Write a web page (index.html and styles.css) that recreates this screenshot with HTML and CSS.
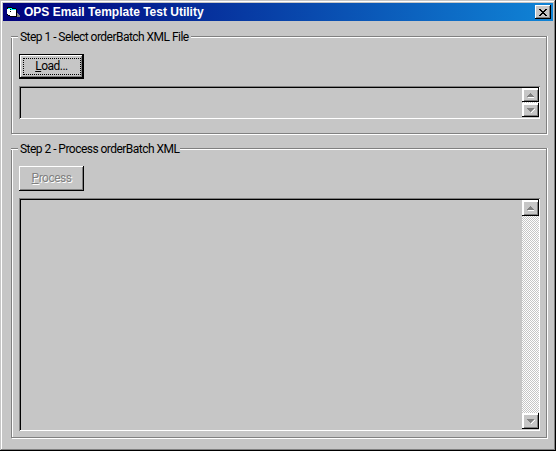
FILE: index.html
```html
<!DOCTYPE html>
<html lang="en">
<head>
<meta charset="utf-8">
<title>OPS Email Template Test Utility</title>
<link rel="stylesheet" href="styles.css">
</head>
<body>
<main class="window">
  <header class="titlebar">
    <svg class="app-icon" width="16" height="16" viewBox="0 0 16 16" shape-rendering="crispEdges">
      <path fill="#808080" d="M12 9h1v1h1v1h1v2h-3z"/>
      <path fill="#000" d="M2 3h5v1h4v1h1v8H5v-1H3v-1H2z"/>
      <path fill="#fff" d="M2 5h3v1h6v6H5v-1H3v-1H2z"/>
      <path fill="#00ffff" d="M3 4h4v1h4v1H6V5H3z"/>
      <path fill="#000" d="M5 7h1v1H5z"/>
    </svg>
    <h1 class="title">OPS Email Template Test Utility</h1>
    <button class="close" aria-label="Close"><svg width="8" height="7" viewBox="0 0 8 7" shape-rendering="crispEdges"><path d="M0 0h2v1h1v1h2V1h1V0h2v1H7v1H6v1H5v1h1v1h1v1h1v1H6V6H5V5H3v1H2v1H0V6h1V5h1V4h1V3H2V2H1V1H0z"/></svg></button>
  </header>
  <section class="group group-load">
    <h2 class="legend"><span class="legend-text step-one">Step 1 - Select orderBatch XML File</span></h2>
    <button class="button default"><span class="focus"><span class="caption"><u>L</u>oad...</span></span></button>
    <div class="textbox path-box">
      <div class="scrollbar">
        <span class="arrow"><svg width="7" height="5" viewBox="0 0 7 5" shape-rendering="crispEdges"><path fill="#fff" d="M1 4h6v1H1z"/><path fill="#808080" d="M3 0h1v1h1v1h1v1h1v1H0V3h1V2h1V1h1z"/></svg></span>
        <span class="arrow"><svg width="8" height="5" viewBox="0 0 8 5" shape-rendering="crispEdges"><path fill="#fff" d="M7 1h1v1H7v1H6v1H5v1H4V4h1V3h1V2h1z"/><path fill="#808080" d="M0 0h7v1H6v1H5v1H4v1H3V3H2V2H1V1H0z"/></svg></span>
      </div>
    </div>
  </section>
  <section class="group group-process">
    <h2 class="legend"><span class="legend-text step-two">Step 2 - Process orderBatch XML</span></h2>
    <button class="button" disabled><span class="caption"><u>P</u>rocess</span></button>
    <div class="textbox output-box">
      <div class="scrollbar">
        <span class="arrow"><svg width="7" height="5" viewBox="0 0 7 5" shape-rendering="crispEdges"><path fill="#fff" d="M1 4h7v1H1z"/><path fill="#808080" d="M3 0h1v1h1v1h1v1h1v1H0V3h1V2h1V1h1z"/></svg></span>
        <span class="arrow"><svg width="8" height="5" viewBox="0 0 8 5" shape-rendering="crispEdges"><path fill="#fff" d="M7 1h1v1H7v1H6v1H5v1H4V4h1V3h1V2h1z"/><path fill="#808080" d="M0 0h7v1H6v1H5v1H4v1H3V3H2V2H1V1H0z"/></svg></span>
      </div>
    </div>
  </section>
</main>
</body>
</html>
```
FILE: styles.css
```css
* { box-sizing: border-box; }
body {
  margin: 0;
  font: 12px/13px Roboto, "Liberation Sans", Arial, sans-serif;
  color: #000;
}
h1, h2 { margin: 0; font-size: inherit; font-weight: normal; }
button { padding: 0; border: 0; font: inherit; color: inherit; border-radius: 0; }
svg { display: block; flex: none; }

.window {
  width: 556px;
  height: 451px;
  padding: 3px;
  background: #c6c6c6;
  box-shadow: inset -1px -1px #000, inset 1px 1px #c6c6c6, inset -2px -2px #808080, inset 2px 2px #fff;
}
.titlebar {
  display: flex;
  align-items: center;
  height: 18px;
  padding: 0 2px;
  background: linear-gradient(90deg, #00007b, #1084d6);
}
.title {
  flex: 1;
  margin-left: 3px;
  color: #fff;
  font-family: "Liberation Sans", Arial, sans-serif;
  font-size: 12px;
  font-weight: bold;
  white-space: nowrap;
}
.close, .arrow {
  display: flex;
  align-items: center;
  justify-content: center;
  background: #c6c6c6;
}
.close {
  width: 16px;
  height: 14px;
  box-shadow: inset -1px -1px #000, inset 1px 1px #fff, inset -2px -2px #808080;
}

.group {
  display: flex;
  flex-direction: column;
  width: 536px;
  margin-left: 8px;
  padding-left: 7px;
  border: 1px solid #808080;
  border-top: 0;
  box-shadow: inset 1px 0 #fff, 1px 0 #fff, 1px 1px #fff;
}
.group-load { height: 98px; margin-top: 15px; }
.group-process { height: 290px; margin-top: 14px; }
.legend {
  display: flex;
  align-items: center;
  height: 14px;
  margin: -6px 0 0 -8px;
}
.legend::before, .legend::after {
  content: "";
  height: 2px;
  background: linear-gradient(#808080 50%, #fff 50%);
}
.legend::before { width: 7px; }
.legend::after { flex: 1; }
.legend-text { padding-left: 2px; white-space: nowrap; letter-spacing: -0.53px; }
.step-one { width: 173px; }
.step-two { width: 162px; }

.button {
  display: flex;
  align-items: center;
  justify-content: center;
  width: 65px;
  height: 25px;
  margin-top: 10px;
  background: #c6c6c6;
  box-shadow: inset -1px -1px #000, inset 1px 1px #fff, inset -2px -2px #808080;
}
.default { border: 1px solid #000; }
.caption { letter-spacing: -0.5px; }
.focus {
  display: flex;
  align-items: center;
  justify-content: center;
  width: 58px;
  height: 17px;
  border: 1px dotted #000;
}
.button:disabled { color: #808080; text-shadow: 1px 1px #fff; }

.textbox {
  display: flex;
  justify-content: flex-end;
  width: 521px;
  margin-top: 7px;
  padding: 2px 1px 2px 2px;
  box-shadow: inset 1px 1px #808080, inset -1px -1px #fff, inset 2px 2px #000;
}
.path-box { height: 33px; }
.output-box { height: 233px; }
.scrollbar {
  display: flex;
  flex-direction: column;
  justify-content: space-between;
  width: 17px;
  background: repeating-conic-gradient(#fff 0 25%, #c6c6c6 0 50%) 0 0 / 2px 2px;
}
.arrow {
  width: 17px;
  height: 16px;
  box-shadow: inset -1px -1px #000, inset 2px 2px #fff, inset -2px -2px #808080;
}
.path-box .arrow { height: 14px; }
```
